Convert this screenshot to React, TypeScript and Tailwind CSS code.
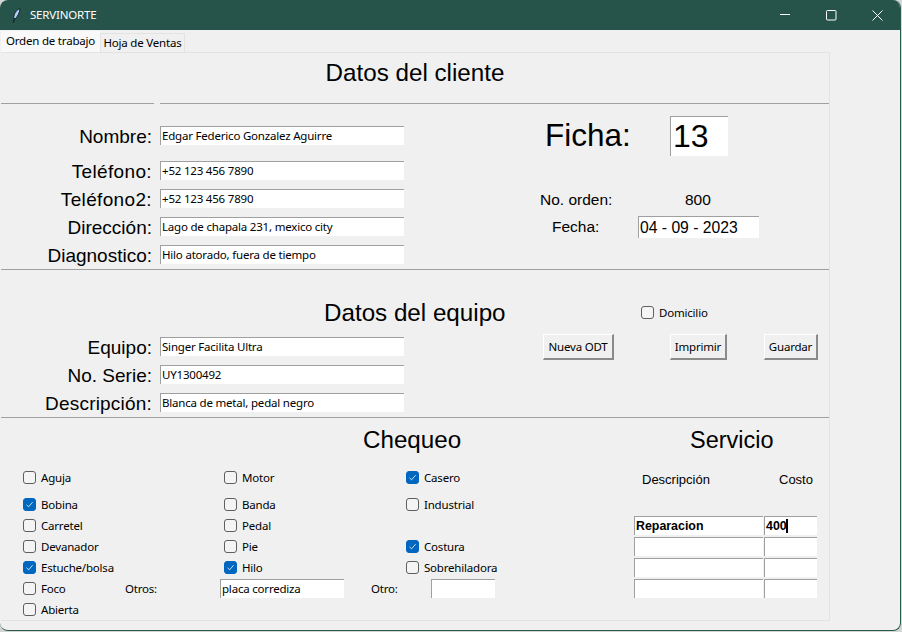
const sans = "font-['Noto_Sans',sans-serif] text-[11.5px] tracking-[-0.2px]";
const arial = "font-['Liberation_Sans',Arial,sans-serif]";

function Entry({ value, className = "" }: { value?: string; className?: string }) {
  return (
    <div
      className={`flex items-center overflow-hidden whitespace-nowrap border-t border-l border-[#a0a0a0] bg-white pl-[1px] text-black ${className}`}
    >
      {value}
    </div>
  );
}

function FieldRow({
  label,
  value,
  className = "",
  labelClass = "",
}: {
  label: string;
  value: string;
  className?: string;
  labelClass?: string;
}) {
  return (
    <div className={`flex h-[19px] items-center ${className}`}>
      <span className={`w-[151px] whitespace-nowrap pt-[2px] text-right text-[19px] leading-none ${arial} ${labelClass}`}>{label}</span>
      <Entry value={value} className={`ml-2 h-[19px] w-[244px] ${sans}`} />
    </div>
  );
}

function Check({ label, checked = false, className = "" }: { label: string; checked?: boolean; className?: string }) {
  return (
    <label className={`flex h-[21px] items-center gap-[5px] whitespace-nowrap ${sans} ${className}`}>
      <span
        className={`flex h-[13px] w-[13px] items-center justify-center rounded-[3px] border ${
          checked ? "border-[#0067c0] bg-[#0067c0]" : "border-[#5f5f5f] bg-[#f4f4f4]"
        }`}
      >
        {checked && (
          <svg width="9" height="9" viewBox="0 0 9 9" fill="none" stroke="white" strokeWidth="0.8">
            <path d="M1.5 4.8 3.6 6.8 7.6 2.2" />
          </svg>
        )}
      </span>
      {label}
    </label>
  );
}

function Separator() {
  return <div className="h-px w-full bg-[#a0a0a0]" />;
}

function Button({ label, className = "" }: { label: string; className?: string }) {
  return (
    <button
      className={`h-[26px] border-t border-l border-t-white border-l-white border-r-2 border-b-2 border-r-[#8a8a8a] border-b-[#8a8a8a] bg-[#f0f0f0] text-black ${sans} ${className}`}
    >
      {label}
    </button>
  );
}

function ServiceRow({ desc, cost }: { desc?: string; cost?: string }) {
  return (
    <div className="flex gap-px">
      <Entry value={desc} className={`h-[19px] w-[129px] text-[12.4px] font-bold ${arial}`} />
      <div className="relative">
        <Entry value={cost} className={`h-[19px] w-[53px] text-[12.4px] font-bold ${arial}`} />
        {cost && <div className="absolute top-[3px] left-[22px] h-[14px] w-[2px] bg-black" />}
      </div>
    </div>
  );
}

export default function App() {
  return (
    <div className="h-[632px] w-[902px] overflow-hidden bg-[#d4d6d5]">
      <div className="h-[631px] w-[901px] overflow-hidden rounded-lg border-r border-b border-[#2a5a4d] bg-[#f0f0f0] text-black">
        {/* title bar */}
        <div className="flex h-[30px] items-center bg-[#27544a] pl-3 text-white">
          <svg width="9" height="15" viewBox="0 0 9 15">
            <path d="M8 0.7 C4.5 1.5 1.8 5.5 1.6 10.5 L3 11 C5.6 8.6 7.6 4.8 8 0.7Z" fill="#b4d0f8" stroke="#0e1c26" strokeWidth="0.9" />
            <path d="M2.6 10.5 1.2 14.5" stroke="#0e1c26" strokeWidth="1.1" fill="none" />
          </svg>
          <span className={`ml-[9px] ${sans}`}>SERVINORTE</span>
          <div className="ml-auto flex h-full">
            <div className="flex w-[46px] items-center justify-center">
              <svg width="10" height="10" viewBox="0 0 10 10" stroke="white" fill="none">
                <path d="M0 4.5H10" />
              </svg>
            </div>
            <div className="flex w-[46px] items-center justify-center">
              <svg width="11" height="11" viewBox="0 0 11 11" stroke="white" fill="none">
                <rect x="0.5" y="0.5" width="9.5" height="9.5" rx="1" />
              </svg>
            </div>
            <div className="flex w-[46px] items-center justify-center">
              <svg width="11" height="11" viewBox="0 0 11 11" stroke="white" fill="none">
                <path d="M0.5 0.5 10.5 10.5M10.5 0.5 0.5 10.5" />
              </svg>
            </div>
          </div>
        </div>

        {/* tabs */}
        <div className={`flex h-[22px] items-end whitespace-nowrap pl-[1px] ${sans}`}>
          <div className="flex h-[21px] w-[99px] items-center justify-center bg-[#f9f9f9] pb-[1px]">Orden de trabajo</div>
          <div className="flex h-[19px] w-[85px] items-center justify-center border-t border-r border-l border-[#e3e3e3]">Hoja de Ventas</div>
        </div>

        {/* notebook page */}
        <div className="ml-[1px] h-[569px] w-[829px] border-t border-r border-b border-[#e3e3e3]">
          <div className={`flex h-[50px] items-center justify-center pb-[10px] text-[24.2px] ${arial}`}>Datos del cliente</div>
          <div className="flex">
            <div className="h-px w-[153px] bg-[#a0a0a0]" />
            <div className="ml-[6px] h-px flex-1 bg-[#a0a0a0]" />
          </div>

          {/* client */}
          <div className="flex h-[165px]">
            <div className="w-[500px] pt-[22px]">
              <FieldRow label="Nombre:" value="Edgar Federico Gonzalez Aguirre" />
              <FieldRow label="Teléfono:" value="+52 123 456 7890" className="mt-4" labelClass="tracking-[0.35px]" />
              <FieldRow label="Teléfono2:" value="+52 123 456 7890" className="mt-[9px]" labelClass="tracking-[0.35px]" />
              <FieldRow label="Dirección:" value="Lago de chapala 231, mexico city" className="mt-[9px]" />
              <FieldRow label="Diagnostico:" value="Hilo atorado, fuera de tiempo" className="mt-[9px]" />
            </div>
            <div className={`flex-1 ${arial}`}>
              <div className="mt-3 flex h-10 items-center">
                <span className="ml-[44px] w-[125px] text-[31.5px]">Ficha:</span>
                <Entry value="13" className="h-10 w-[58px] pb-[2px] pl-[2px] text-[32px]" />
              </div>
              <div className="mt-[33px] flex h-[22px] items-center text-[15.5px]">
                <span className="ml-[39px] w-[145px]">No. orden:</span>
                <span>800</span>
              </div>
              <div className="mt-[5px] flex h-[22px] items-center text-[15.5px]">
                <span className="ml-[51px] w-[86px]">Fecha:</span>
                <Entry value="04 - 09 - 2023" className="h-[22px] w-[121px] text-[15.7px]" />
              </div>
            </div>
          </div>
          <Separator />

          {/* equipment */}
          <div className="flex h-[147px]">
            <div className="w-[500px]">
              <div className={`mt-[29px] flex h-[28px] items-center whitespace-nowrap pl-[323px] text-[24.2px] ${arial}`}>Datos del equipo</div>
              <FieldRow label="Equipo:" value="Singer Facilita Ultra" className="mt-[10px]" />
              <FieldRow label="No. Serie:" value="UY1300492" className="mt-[9px]" />
              <FieldRow label="Descripción:" value="Blanca de metal, pedal negro" className="mt-[9px]" labelClass="tracking-[0.2px]" />
            </div>
            <div className="flex-1">
              <Check label="Domicilio" className="mt-[32px] ml-[140px]" />
              <div className="mt-[11px] flex">
                <Button label="Nueva ODT" className="ml-[42px] w-[71px]" />
                <Button label="Imprimir" className="ml-[56px] w-[57px]" />
                <Button label="Guardar" className="ml-[37px] w-[54px]" />
              </div>
            </div>
          </div>
          <Separator />

          {/* checklist */}
          <div className="flex h-[203px]">
            <div className="w-[630px]">
              <div className={`mt-[8px] h-[28px] pl-[362px] text-[24.2px] leading-[28px] ${arial}`}>Chequeo</div>
              <div className="mt-[13px] flex pl-[22px]">
                <div className="w-[201px]">
                  <Check label="Aguja" />
                  <Check label="Bobina" className="mt-[6px]" checked />
                  <Check label="Carretel" />
                  <Check label="Devanador" />
                  <Check label="Estuche/bolsa" checked />
                  <div className="flex items-center">
                    <Check label="Foco" className="w-[102px]" />
                    <span className={sans}>Otros:</span>
                  </div>
                  <Check label="Abierta" />
                </div>
                <div className="w-[182px]">
                  <Check label="Motor" />
                  <Check label="Banda" className="mt-[6px]" />
                  <Check label="Pedal" />
                  <Check label="Pie" />
                  <Check label="Hilo" checked />
                  <Entry value="placa corrediza" className={`-ml-[4px] mt-px h-[19px] w-[124px] ${sans}`} />
                </div>
                <div>
                  <Check label="Casero" checked />
                  <Check label="Industrial" className="mt-[6px]" />
                  <div className="h-[21px]" />
                  <Check label="Costura" checked />
                  <Check label="Sobrehiladora" />
                  <div className="mt-px flex h-[19px] items-center">
                    <span className={`-ml-[35px] w-[60px] ${sans}`}>Otro:</span>
                    <Entry className="h-[19px] w-[64px]" />
                  </div>
                </div>
              </div>
            </div>
            <div className="flex-1">
              <div className={`mt-[8px] h-[28px] pl-[59px] text-[23.5px] leading-[28px] ${arial}`}>Servicio</div>
              <div className={`mt-[15px] flex h-[21px] items-center text-[13px] ${arial}`}>
                <span className="ml-[11px] w-[137px]">Descripción</span>
                <span>Costo</span>
              </div>
              <div className="mt-[26px] flex flex-col gap-[2px] pl-[3px]">
                <ServiceRow desc="Reparacion" cost="400" />
                <ServiceRow />
                <ServiceRow />
                <ServiceRow />
              </div>
            </div>
          </div>
        </div>
      </div>
    </div>
  );
}
